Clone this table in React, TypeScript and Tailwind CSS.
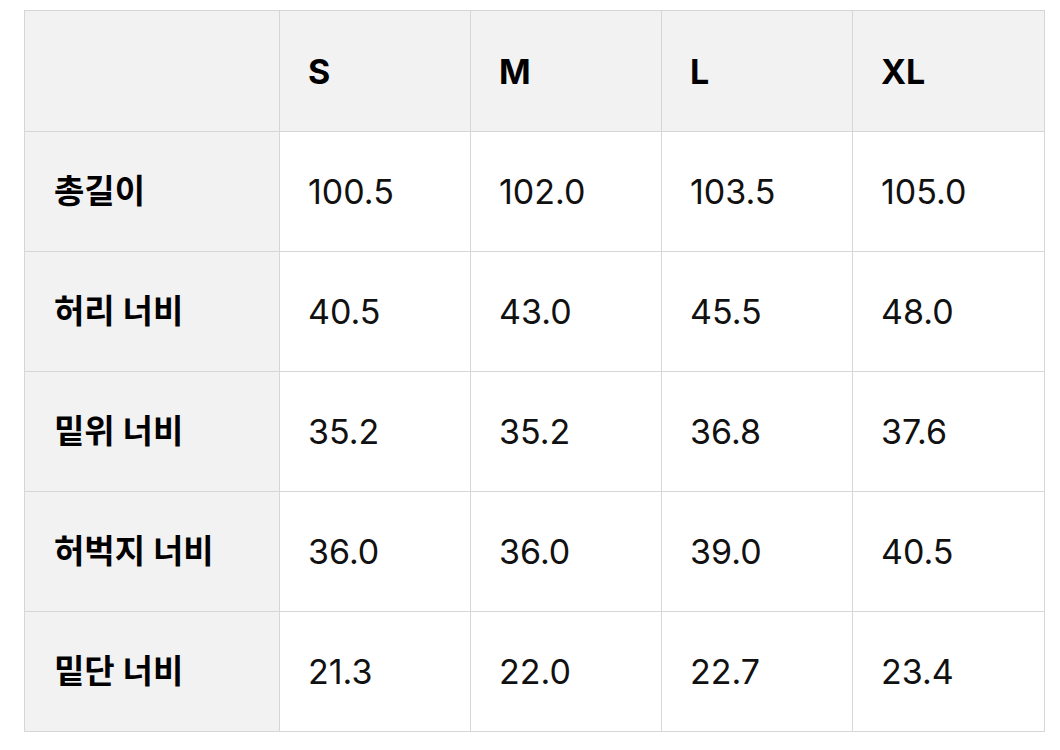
const sizes = ['S', 'M', 'L', 'XL']

const rows = [
  { label: '총길이', values: ['100.5', '102.0', '103.5', '105.0'] },
  { label: '허리 너비', values: ['40.5', '43.0', '45.5', '48.0'] },
  { label: '밑위 너비', values: ['35.2', '35.2', '36.8', '37.6'] },
  { label: '허벅지 너비', values: ['36.0', '36.0', '39.0', '40.5'] },
  { label: '밑단 너비', values: ['21.3', '22.0', '22.7', '23.4'] },
]

export default function App() {
  return (
    <div
      className="w-[1060px] h-[750px] bg-white pt-[10px] pl-[24px]"
      style={{ fontFamily: 'Inter, "Noto Sans CJK KR", sans-serif' }}
    >
      <table className="border-collapse table-fixed w-[1020px] text-[34px] text-[#111]">
        <colgroup>
          <col className="w-[255px]" />
          <col className="w-[191px]" />
          <col className="w-[191px]" />
          <col className="w-[191px]" />
          <col className="w-[192px]" />
        </colgroup>
        <thead>
          <tr className="h-[121px] bg-[#f2f2f2]">
            <th className="border border-[#d6d6d6]" />
            {sizes.map((s) => (
              <th
                key={s}
                className="border border-[#d6d6d6] text-left pl-[28px] font-bold text-black"
              >
                {s}
              </th>
            ))}
          </tr>
        </thead>
        <tbody>
          {rows.map((row) => (
            <tr key={row.label} className="h-[120px]">
              <td className="border border-[#d6d6d6] bg-[#f2f2f2] pl-[29px] text-[33px] font-bold text-black whitespace-nowrap">
                {row.label}
              </td>
              {row.values.map((v, i) => (
                <td key={i} className="border border-[#d6d6d6] pl-[28px] font-normal">
                  {v}
                </td>
              ))}
            </tr>
          ))}
        </tbody>
      </table>
    </div>
  )
}
